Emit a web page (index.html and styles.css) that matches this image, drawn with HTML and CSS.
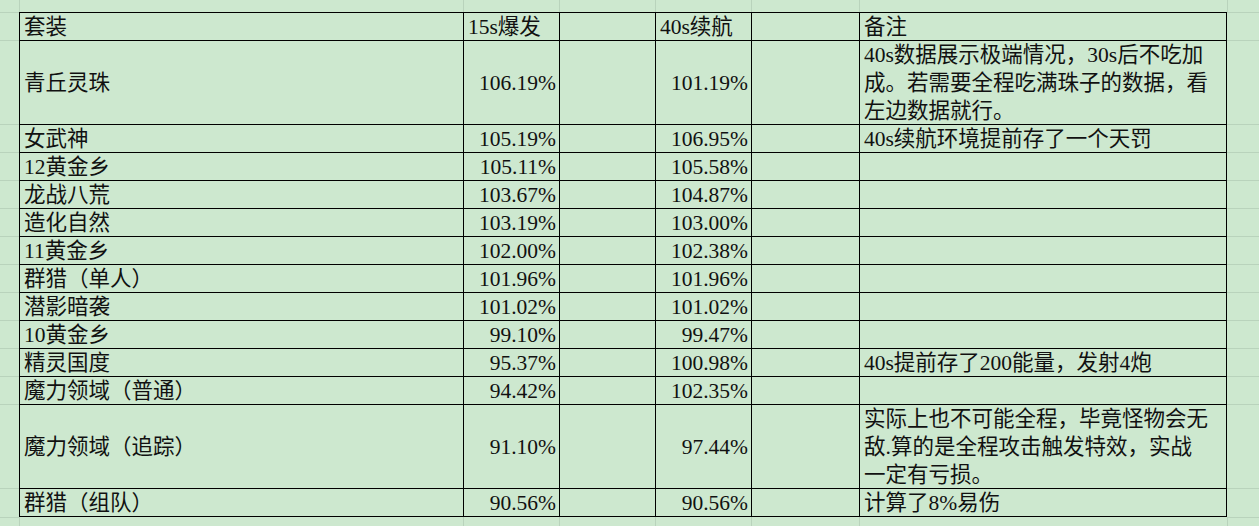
FILE: index.html
```html
<!DOCTYPE html>
<html lang="zh-CN">
<head>
<meta charset="utf-8">
<title>套装数据</title>
<link rel="stylesheet" href="styles.css">
</head>
<body>
<div class="sheet">
  <div class="row edge-top">
    <div></div><div class="vline"></div><div class="vline"></div><div class="vline"></div><div class="vline"></div><div class="vline"></div><div class="vline"></div><div class="vline"></div>
  </div>

  <div class="row">
    <div class="side"></div>
    <div class="cell">套装</div>
    <div class="cell">15s爆发</div>
    <div class="cell"></div>
    <div class="cell">40s续航</div>
    <div class="cell"></div>
    <div class="cell note">备注</div>
    <div class="side"></div>
  </div>

  <div class="row tall">
    <div class="side"></div>
    <div class="cell">青丘灵珠</div>
    <div class="cell num">106.19%</div>
    <div class="cell"></div>
    <div class="cell num">101.19%</div>
    <div class="cell"></div>
    <div class="cell note"><span>40s数据展示极端情况，30s后不吃加<br>成。若需要全程吃满珠子的数据，看<br>左边数据就行。</span></div>
    <div class="side"></div>
  </div>

  <div class="row">
    <div class="side"></div>
    <div class="cell">女武神</div>
    <div class="cell num">105.19%</div>
    <div class="cell"></div>
    <div class="cell num">106.95%</div>
    <div class="cell"></div>
    <div class="cell note">40s续航环境提前存了一个天罚</div>
    <div class="side"></div>
  </div>

  <div class="row">
    <div class="side"></div>
    <div class="cell">12黄金乡</div>
    <div class="cell num">105.11%</div>
    <div class="cell"></div>
    <div class="cell num">105.58%</div>
    <div class="cell"></div>
    <div class="cell note"></div>
    <div class="side"></div>
  </div>

  <div class="row">
    <div class="side"></div>
    <div class="cell">龙战八荒</div>
    <div class="cell num">103.67%</div>
    <div class="cell"></div>
    <div class="cell num">104.87%</div>
    <div class="cell"></div>
    <div class="cell note"></div>
    <div class="side"></div>
  </div>

  <div class="row">
    <div class="side"></div>
    <div class="cell">造化自然</div>
    <div class="cell num">103.19%</div>
    <div class="cell"></div>
    <div class="cell num">103.00%</div>
    <div class="cell"></div>
    <div class="cell note"></div>
    <div class="side"></div>
  </div>

  <div class="row">
    <div class="side"></div>
    <div class="cell">11黄金乡</div>
    <div class="cell num">102.00%</div>
    <div class="cell"></div>
    <div class="cell num">102.38%</div>
    <div class="cell"></div>
    <div class="cell note"></div>
    <div class="side"></div>
  </div>

  <div class="row">
    <div class="side"></div>
    <div class="cell">群猎（单人）</div>
    <div class="cell num">101.96%</div>
    <div class="cell"></div>
    <div class="cell num">101.96%</div>
    <div class="cell"></div>
    <div class="cell note"></div>
    <div class="side"></div>
  </div>

  <div class="row">
    <div class="side"></div>
    <div class="cell">潜影暗袭</div>
    <div class="cell num">101.02%</div>
    <div class="cell"></div>
    <div class="cell num">101.02%</div>
    <div class="cell"></div>
    <div class="cell note"></div>
    <div class="side"></div>
  </div>

  <div class="row">
    <div class="side"></div>
    <div class="cell">10黄金乡</div>
    <div class="cell num">99.10%</div>
    <div class="cell"></div>
    <div class="cell num">99.47%</div>
    <div class="cell"></div>
    <div class="cell note"></div>
    <div class="side"></div>
  </div>

  <div class="row">
    <div class="side"></div>
    <div class="cell">精灵国度</div>
    <div class="cell num">95.37%</div>
    <div class="cell"></div>
    <div class="cell num">100.98%</div>
    <div class="cell"></div>
    <div class="cell note">40s提前存了200能量，发射4炮</div>
    <div class="side"></div>
  </div>

  <div class="row">
    <div class="side"></div>
    <div class="cell">魔力领域（普通）</div>
    <div class="cell num">94.42%</div>
    <div class="cell"></div>
    <div class="cell num">102.35%</div>
    <div class="cell"></div>
    <div class="cell note"></div>
    <div class="side"></div>
  </div>

  <div class="row tall">
    <div class="side"></div>
    <div class="cell">魔力领域（追踪）</div>
    <div class="cell num">91.10%</div>
    <div class="cell"></div>
    <div class="cell num">97.44%</div>
    <div class="cell"></div>
    <div class="cell note"><span>实际上也不可能全程，毕竟怪物会无<br>敌.算的是全程攻击触发特效，实战<br>一定有亏损。</span></div>
    <div class="side"></div>
  </div>

  <div class="row last">
    <div class="side"></div>
    <div class="cell">群猎（组队）</div>
    <div class="cell num">90.56%</div>
    <div class="cell"></div>
    <div class="cell num">90.56%</div>
    <div class="cell"></div>
    <div class="cell note">计算了8%易伤</div>
    <div class="side"></div>
  </div>

  <div class="row edge-bottom">
    <div class="side"></div><div class="vline"></div><div class="vline"></div><div class="vline"></div><div class="vline"></div><div class="vline"></div><div class="vline"></div><div class="vline side"></div>
  </div>
</div>
</body>
</html>
```

FILE: styles.css
```css
html, body {
  margin: 0;
  padding: 0;
}

body {
  background: #cde8cf;
  color: #111;
  font-family: "Liberation Serif", "Noto Sans CJK SC", serif;
  font-size: 21.5px;
  overflow: hidden;
}

.sheet {
  display: flex;
  flex-direction: column;
  height: 526px;
  overflow: hidden;
}

.row {
  display: grid;
  grid-template-columns: 19px 444px 96px 96px 96px 108px 368px 1fr;
  height: 28px;
  flex: none;
}

.row.tall {
  height: 84px;
}

.row.last {
  height: 29px;
}

.row.edge-top {
  height: 12px;
}

.row.edge-bottom {
  flex: 1;
  height: auto;
}

.side {
  border-top: 1px solid #b9d3bc;
}

.vline {
  border-left: 1px solid #b9d3bc;
}

.cell {
  border-left: 1px solid #000;
  border-top: 1px solid #000;
  padding: 1px 3px 0 4px;
  line-height: 27px;
  display: flex;
  align-items: center;
  white-space: nowrap;
  overflow: hidden;
}

.cell.num {
  justify-content: flex-end;
}

.cell.note {
  border-right: 1px solid #000;
}

.row.last .cell {
  border-bottom: 1px solid #000;
}

.cell.note span {
  line-height: 28px;
}
```
